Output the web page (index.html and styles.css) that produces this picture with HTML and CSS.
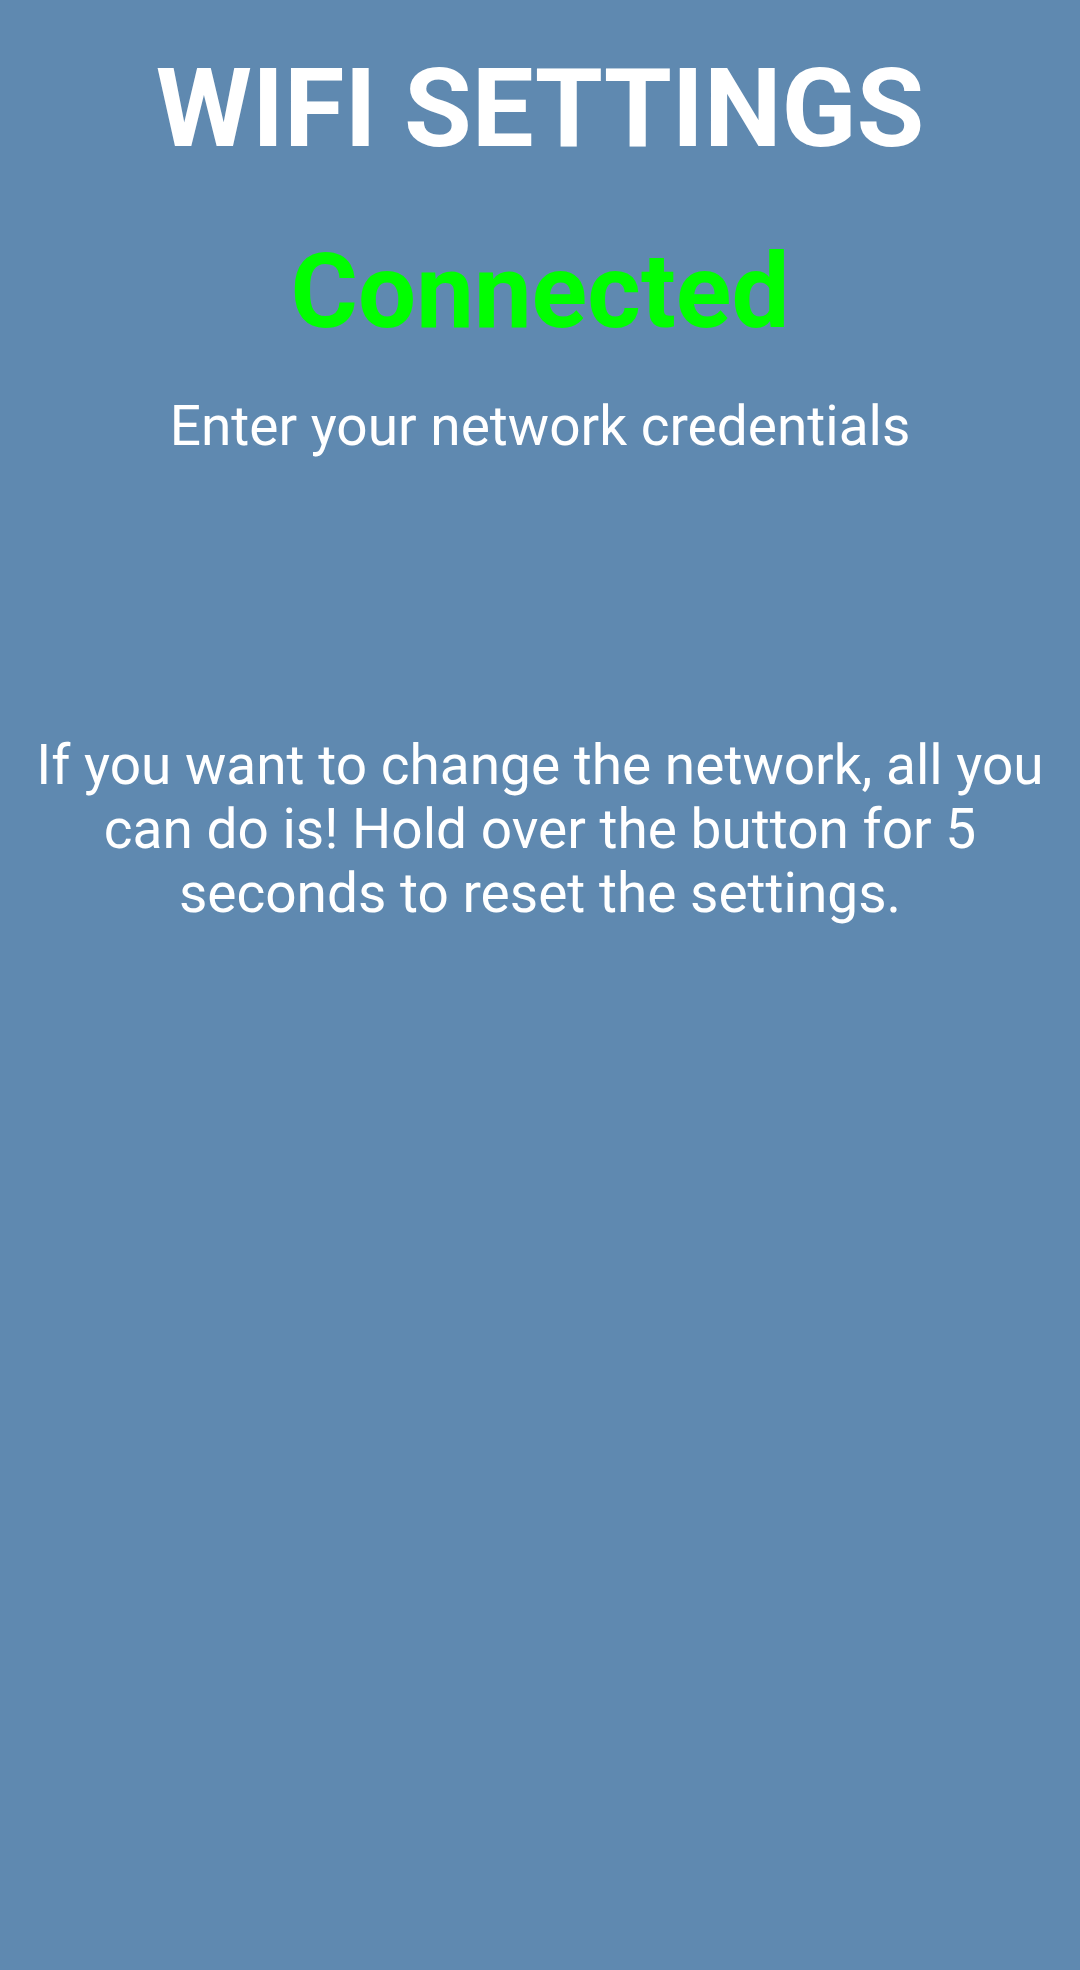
FILE: index.html
```html
<!DOCTYPE html>
<html>
<head>
<meta charset="utf-8">
<link rel="stylesheet" href="styles.css">
</head>
<body>
<main class="page">
  <h1 class="title">WIFI SETTINGS</h1>
  <h2 class="status">Connected</h2>
  <p class="subtitle">Enter your network credentials</p>
  <p class="note">If you want to change the network, all you can do is! Hold over the button for 5 seconds to reset the settings.</p>
</main>
</body>
</html>
```
FILE: styles.css
```css
html, body {
  margin: 0;
  padding: 0;
  background: #5f89b0;
}
body {
  width: 1080px;
  height: 1970px;
  font-family: Roboto, "Noto Sans", sans-serif;
  color: #ffffff;
}
.page {
  display: flex;
  flex-direction: column;
  align-items: center;
  text-align: center;
  padding: 44px 20px 0;
}
.title {
  margin: 0;
  font-size: 110px;
  font-weight: 700;
  line-height: normal;
}
.status {
  margin: 58px 0 0;
  font-size: 103px;
  font-weight: 700;
  line-height: normal;
  color: #00ff00;
}
.subtitle {
  margin: 42px 0 0;
  font-size: 55px;
  font-weight: 400;
  line-height: normal;
}
.note {
  margin: 275px 0 0;
  font-size: 55px;
  font-weight: 400;
  line-height: normal;
}
```
